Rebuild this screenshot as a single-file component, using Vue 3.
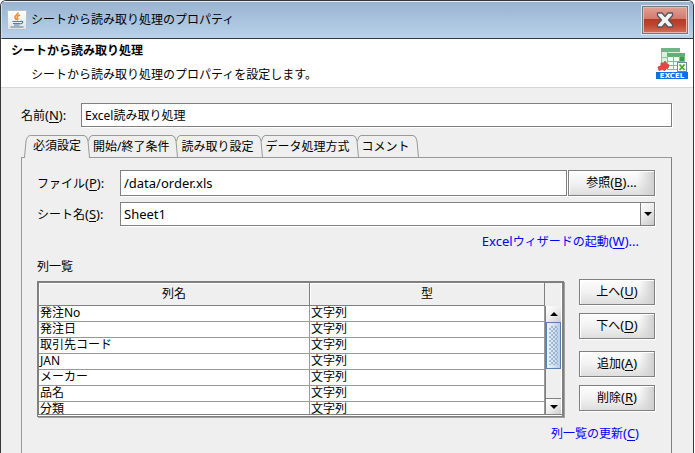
<script setup>
import { ref } from 'vue'

const name = ref('Excel読み取り処理')
const file = ref('/data/order.xls')
const sheet = ref('Sheet1')
const tabs = ['必須設定', '開始/終了条件', '読み取り設定', 'データ処理方式', 'コメント']
const active = ref(0)
const rows = ['発注No', '発注日', '取引先コード', 'JAN', 'メーカー', '品名', '分類']
const actions = [
  { text: '上へ', key: 'U' },
  { text: '下へ', key: 'D' },
  { text: '追加', key: 'A' },
  { text: '削除', key: 'R' }
]
</script>

<template>
  <div class="window">
    <header class="titlebar">
      <svg class="java" viewBox="0 0 20 20" aria-hidden="true">
        <defs>
          <linearGradient id="tile" x1="0" y1="0" x2="0" y2="1">
            <stop offset="0" stop-color="#fff" />
            <stop offset="1" stop-color="#dfe3e6" />
          </linearGradient>
        </defs>
        <rect x=".5" y=".5" width="19" height="19" rx="1" fill="url(#tile)" stroke="#b9c1c8" />
        <path d="M11 2.500c1 2-4 3-3 5.200c.3.9 1.200 1.600 1.500 2.300M13 5c-2 .8-3.500 1.600-2.700 2.900c.6.8.5 1.500-.3 2.100" fill="none" stroke="#ee8a2c" stroke-width="1.600" />
        <path d="M5.500 11.500h8M6 13.500h7M7 15h5.500M13.500 11.500c3-1 3 2-.5 2.500M3.500 17h13" fill="none" stroke="#557f9d" stroke-width="1.200" />
      </svg>
      <span class="caption">シートから読み取り処理のプロパティ</span>
      <button class="close" type="button" aria-label="閉じる">
        <svg viewBox="0 0 20 16" aria-hidden="true">
          <path d="M2.500 1h4.500l3 3.500L13 1h4.500v2.500L13.500 8l4 4.500V15H13l-3-3.500L7 15H2.500v-2.500l4-4.500-4-4.500z" fill="#f3f3f3" stroke="#54575f" stroke-width="1.300" stroke-linejoin="round" />
        </svg>
      </button>
    </header>

    <section class="banner">
      <div class="banner-text">
        <h1>シートから読み取り処理</h1>
        <p>シートから読み取り処理のプロパティを設定します。</p>
      </div>
      <svg class="excel" viewBox="0 0 32 32" role="img" aria-label="EXCEL">
        <rect x="5" y="1" width="19" height="19" fill="#dcefe1" />
        <rect x="5" y="1" width="19" height="4" fill="#6fb585" />
        <path d="M5.500 5v15M11.500 5v15M5 10.500h8M5 15.500h8" stroke="#8cc49c" />
        <rect x="11" y="6" width="18" height="18" fill="#f4fbf5" />
        <rect x="11" y="6" width="18" height="4" fill="#62ad78" />
        <rect x="24" y="10" width="5" height="4" fill="#33a247" />
        <path d="M11.500 9v14M17.500 9v14M23.500 9v14M28.500 9v14M11 14.500h18M11 18.500h18M11 22.500h18" stroke="#80bd90" />
        <path d="M2 20l3-1v-3l3 .5L9 14l1.500 3 2.500 1-1 3-2 .5-1 2-3-1-3 1z" fill="#e04a42" stroke="#ca504a" />
        <rect x="21.500" y="15.500" width="9" height="9" fill="#f4fff4" stroke="#7185a5" />
        <path d="M23.500 17.500l5 5.500M28.500 17.500l-5 5.500" stroke="#38ad33" stroke-width="1.800" />
        <rect y="25" width="32" height="7" fill="#0f6fe8" />
        <text x="16" y="31" text-anchor="middle" class="excel-word">EXCEL</text>
      </svg>
    </section>

    <main class="body">
      <div class="name-row">
        <label for="name">名前<span class="key">(<u>N</u>):</span></label>
        <input id="name" v-model="name" type="text" />
      </div>

      <div class="tabs" role="tablist">
        <svg class="tab-start" viewBox="0 0 12 23" aria-hidden="true">
          <path d="M3.500 23L5 6Q6 .5 9.500 .5H12V23z" fill="#efefef" />
          <path d="M0 22.500h3.500L5 6Q6 .5 9.500 .5H12" fill="none" stroke="#999" />
        </svg>
        <template v-for="(tab, i) in tabs" :key="tab">
          <button
            type="button"
            role="tab"
            class="tab"
            :class="{ selected: i === active }"
            :aria-selected="i === active"
            @click="active = i"
          >{{ tab }}</button>
          <svg class="tab-edge" viewBox="0 0 12 23" aria-hidden="true">
            <path v-if="i === active" d="M0 1H3Q6 1 7 6L8 23H0z" fill="#efefef" />
            <path d="M0 .5H3Q6 .5 7 6L8.500 22.500" fill="none" stroke="#999" />
            <path v-if="i < tabs.length - 1" d="M7.500 6Q8.500 .5 11 .5H12" fill="none" stroke="#999" />
          </svg>
        </template>
      </div>

      <section class="panel">
        <div class="form">
          <label for="file">ファイル<span class="key">(<u>P</u>):</span></label>
          <div class="file-row">
            <input id="file" v-model="file" type="text" class="latin" />
            <button type="button" class="btn">参照<span class="key">(<u>B</u>)...</span></button>
          </div>
          <label for="sheet">シート名<span class="key">(<u>S</u>):</span></label>
          <div class="combo">
            <select id="sheet" v-model="sheet" class="latin">
              <option>Sheet1</option>
            </select>
            <span class="drop" aria-hidden="true">
              <svg viewBox="0 0 8 4"><path d="M0 0h8L4 4z" /></svg>
            </span>
          </div>
        </div>

        <a class="link wizard" href="#"><span class="key">Excel</span>ウィザードの起動<span class="key">(<u>W</u>)...</span></a>

        <div id="list-title" class="list-title">列一覧</div>
        <div class="list-row">
          <div class="grid-frame">
            <div class="grid-view">
              <table aria-labelledby="list-title">
                <thead>
                  <tr><th class="first">列名</th><th>型</th></tr>
                </thead>
                <tbody>
                  <tr v-for="row in rows" :key="row"><td>{{ row }}</td><td>文字列</td></tr>
                </tbody>
              </table>
            </div>
            <div class="scroll" aria-hidden="true">
              <div class="corner"></div>
              <div class="arrow"><svg viewBox="0 0 8 4"><path d="M0 4h8L4 0z" /></svg></div>
              <div class="track"><div class="thumb"><div class="dots"></div></div></div>
              <div class="arrow down"><svg viewBox="0 0 8 4"><path d="M0 0h8L4 4z" /></svg></div>
            </div>
          </div>
          <div class="actions">
            <button v-for="a in actions" :key="a.key" type="button" class="btn">{{ a.text }}<span class="key">(<u>{{ a.key }}</u>)</span></button>
          </div>
        </div>

        <a class="link" href="#">列一覧の更新<span class="key">(<u>C</u>)</span></a>
      </section>
    </main>
  </div>
</template>

<style>
body {
  margin: 0;
  background: #fff;
  overflow: hidden;
}
</style>

<style scoped>
.window {
  box-sizing: border-box;
  min-height: 100vh;
  margin-right: 1px;
  border: 1px solid #35373b;
  border-bottom: 0;
  border-radius: 6px 6px 0 0;
  background: #efefef;
  color: #000;
  font: 12px/16px "Noto Sans", "Noto Sans CJK JP", sans-serif;
  overflow: hidden;
}
.window * {
  box-sizing: border-box;
}
input,
button,
select {
  margin: 0;
  border-radius: 0;
  color: inherit;
  font: inherit;
}
.key,
.latin {
  font-size: 13px;
}
u {
  text-underline-offset: 2px;
}

.titlebar {
  display: flex;
  align-items: center;
  height: 38px;
  padding: 0 5px;
  border-top: 1px solid #e4edf6;
  border-left: 1px solid #cfdeed;
  border-bottom: 1px solid #35373b;
  background: linear-gradient(#99b4d1, #b9d1ea);
}
.java {
  width: 20px;
  height: 20px;
  margin-right: 4px;
}
.caption {
  flex: 1;
}
.close {
  display: grid;
  place-items: center;
  width: 46px;
  height: 28px;
  padding: 0;
  border: 1px solid #707983;
  outline: 1px solid #d9e5f1;
  box-shadow: inset 0 0 0 1px #e9b6ac;
  background: linear-gradient(#e2a095, #d37b6c 45%, #b53a23 46%, #bd4630 70%, #d5705a);
}
.close svg {
  width: 20px;
  height: 16px;
}

.banner {
  display: flex;
  justify-content: space-between;
  height: 49px;
  padding: 4px 5px 0 10px;
  border-bottom: 1px solid #d6d6d6;
  background: #fff;
}
h1 {
  margin: 0;
  font-size: 12px;
  line-height: 16px;
}
p {
  margin: 8px 0 0 20px;
}
.excel {
  width: 32px;
  height: 32px;
  margin-top: 4px;
}
.excel-word {
  fill: #fff;
  font: bold 7px "DejaVu Sans", sans-serif;
}

.body {
  padding: 15px 21px 0 20px;
}
.name-row {
  display: grid;
  grid-template-columns: 60px 1fr;
  align-items: center;
}
input,
select {
  width: 100%;
  min-width: 0;
  height: 24px;
  padding: 0 3px;
  border: 1px solid #808080;
  background: #fff;
  box-shadow: 1px 1px #fff;
  outline: 0;
}

.tabs {
  position: relative;
  z-index: 1;
  display: flex;
  margin-top: 8px;
  margin-bottom: -1px;
}
.tab-start,
.tab-edge {
  flex: none;
  width: 12px;
  height: 23px;
}
.tab {
  height: 22px;
  padding: 0;
  border: 0;
  border-top: 1px solid #999;
  background: none;
  line-height: 20px;
  white-space: nowrap;
}
.tab.selected {
  height: 23px;
  padding-bottom: 2px;
  background: #efefef;
}

.panel {
  display: flex;
  flex-direction: column;
  min-height: 296px;
  padding: 12px 16px 0 15px;
  border: 1px solid #999;
  border-right-color: #808080;
  border-bottom: 0;
}
.form {
  display: grid;
  grid-template-columns: 83px 1fr;
  row-gap: 6px;
  align-items: center;
}
.file-row {
  display: grid;
  grid-template-columns: 1fr 87px;
  column-gap: 1px;
}
.file-row input {
  height: 26px;
}
.btn {
  height: 26px;
  padding: 0 0 1px;
  border: 1px solid #808080;
  box-shadow: 1px 1px #fff, inset 1px 1px #fff;
  background: linear-gradient(to right, transparent 80%, #d0d0d0), linear-gradient(#fdfdfd, #f2f2f2 50%, #dedede);
}
.combo {
  position: relative;
}
.combo select {
  display: block;
  appearance: none;
}
.drop {
  position: absolute;
  inset: 1px 1px 1px auto;
  display: grid;
  place-items: center;
  width: 14px;
  border-left: 1px solid #808080;
  background: linear-gradient(135deg, #fff, #eee 40%, #c8c8c8);
  pointer-events: none;
}
.drop svg,
.arrow svg {
  display: block;
  width: 8px;
  height: 4px;
}
.link {
  align-self: flex-end;
  margin-right: 16px;
  color: #00f;
  text-decoration: none;
}
.wizard {
  margin-top: 7px;
}
.list-title {
  margin-top: 9px;
}
.list-row {
  display: flex;
  align-items: flex-start;
  gap: 15px;
  margin-top: 4px;
}
.grid-frame {
  flex: 1;
  display: flex;
  height: 136px;
  margin-top: 2px;
  padding-bottom: 1px;
  border: 2px solid #808080;
  border-left-width: 1px;
  border-bottom-width: 1px;
  background: #fff;
  box-shadow: 1px 1px #a0a09c;
}
.grid-view {
  flex: 1;
  overflow: hidden;
  border-left: 1px solid #808080;
  border-bottom: 1px solid #808080;
}
table {
  width: 100%;
  border-collapse: separate;
  border-spacing: 0;
  table-layout: fixed;
}
th,
td {
  height: 16px;
  padding: 0 0 0 1px;
  border: 1px solid #999;
  border-width: 0 1px 1px 0;
  background: #fff;
  line-height: 14px;
  text-align: left;
  vertical-align: top;
  font-weight: 400;
}
th {
  height: 23px;
  padding: 0;
  border-color: #808080;
  background: #efefef;
  box-shadow: inset 1px 1px #fff;
  line-height: 22px;
  text-align: center;
}
.first {
  width: 271px;
}
.scroll {
  display: flex;
  flex-direction: column;
  width: 17px;
  padding-right: 1px;
  border-bottom: 1px solid #808080;
}
.corner {
  height: 23px;
  background: #efefef;
}
.arrow {
  display: grid;
  place-items: center;
  height: 16px;
  border-left: 1px solid #808080;
  background: linear-gradient(135deg, #fff, #eee 50%, #ccc);
}
.down {
  border-top: 1px solid #808080;
}
.track {
  flex: 1;
  border-left: 1px solid #808080;
  background: #efefef;
}
.thumb {
  height: 47px;
  padding: 3px 2px;
  border: 1px solid #5b7fae;
  background: linear-gradient(to right, #eef5fc, #b8cfe5);
}
.dots {
  height: 100%;
  background-image: conic-gradient(#7f9cc0 25%, transparent 0 50%, #7f9cc0 0 75%, transparent 0);
  background-size: 4px 4px;
  opacity: 0.6;
}
.actions {
  display: grid;
  grid-template-columns: 76px;
  row-gap: 8px;
}
.actions .btn:nth-child(3) {
  margin-top: 4px;
}
.list-row + .link {
  margin-top: 8px;
}
</style>
